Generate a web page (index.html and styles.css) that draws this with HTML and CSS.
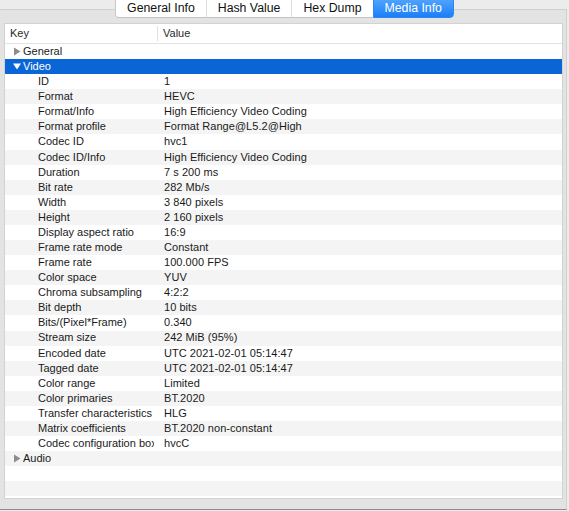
FILE: index.html
```html
<!DOCTYPE html>
<html lang="en">
<head>
    <meta charset="UTF-8">
    <title>Media Info</title>
    <link rel="stylesheet" href="styles.css">
</head>
<body>
    <div class="tabs">
        <div class="seg">General Info</div>
        <div class="seg">Hash Value</div>
        <div class="seg">Hex Dump</div>
        <div class="seg active">Media Info</div>
    </div>

    <div class="tabbox">
        <div class="table">
            <div class="thead">
                <div class="hkey">Key</div>
                <div class="hval">Value</div>
            </div>
            <div class="tbody">
                <div class="row group">
                    <div class="key"><svg class="tri" width="8" height="9" viewBox="0 0 8 9"><path d="M1 0.5 L7.5 4.5 L1 8.5 Z" fill="#8c8c8c"/></svg>General</div>
                </div>
                <div class="row group selected">
                    <div class="key"><svg class="tri" width="8" height="9" viewBox="0 0 8 9"><path d="M0 1.5 L8 1.5 L4 7.5 Z" fill="#fff"/></svg>Video</div>
                </div>
                <div class="row"><div class="key">ID</div><div class="val">1</div></div>
                <div class="row"><div class="key">Format</div><div class="val">HEVC</div></div>
                <div class="row"><div class="key">Format/Info</div><div class="val">High Efficiency Video Coding</div></div>
                <div class="row"><div class="key">Format profile</div><div class="val">Format Range@L5.2@High</div></div>
                <div class="row"><div class="key">Codec ID</div><div class="val">hvc1</div></div>
                <div class="row"><div class="key">Codec ID/Info</div><div class="val">High Efficiency Video Coding</div></div>
                <div class="row"><div class="key">Duration</div><div class="val">7 s 200 ms</div></div>
                <div class="row"><div class="key">Bit rate</div><div class="val">282 Mb/s</div></div>
                <div class="row"><div class="key">Width</div><div class="val">3 840 pixels</div></div>
                <div class="row"><div class="key">Height</div><div class="val">2 160 pixels</div></div>
                <div class="row"><div class="key">Display aspect ratio</div><div class="val">16:9</div></div>
                <div class="row"><div class="key">Frame rate mode</div><div class="val">Constant</div></div>
                <div class="row"><div class="key">Frame rate</div><div class="val">100.000 FPS</div></div>
                <div class="row"><div class="key">Color space</div><div class="val">YUV</div></div>
                <div class="row"><div class="key">Chroma subsampling</div><div class="val">4:2:2</div></div>
                <div class="row"><div class="key">Bit depth</div><div class="val">10 bits</div></div>
                <div class="row"><div class="key">Bits/(Pixel*Frame)</div><div class="val">0.340</div></div>
                <div class="row"><div class="key">Stream size</div><div class="val">242 MiB (95%)</div></div>
                <div class="row"><div class="key">Encoded date</div><div class="val">UTC 2021-02-01 05:14:47</div></div>
                <div class="row"><div class="key">Tagged date</div><div class="val">UTC 2021-02-01 05:14:47</div></div>
                <div class="row"><div class="key">Color range</div><div class="val">Limited</div></div>
                <div class="row"><div class="key">Color primaries</div><div class="val">BT.2020</div></div>
                <div class="row"><div class="key">Transfer characteristics</div><div class="val">HLG</div></div>
                <div class="row"><div class="key">Matrix coefficients</div><div class="val">BT.2020 non-constant</div></div>
                <div class="row"><div class="key">Codec configuration box</div><div class="val">hvcC</div></div>
                <div class="row group">
                    <div class="key"><svg class="tri" width="8" height="9" viewBox="0 0 8 9"><path d="M1 0.5 L7.5 4.5 L1 8.5 Z" fill="#8c8c8c"/></svg>Audio</div>
                </div>
            </div>
        </div>
    </div>
</body>
</html>
```

FILE: styles.css
```css
body {
    margin: 0;
    background-color: #ececec;
    font-family: 'Liberation Sans', Arial, sans-serif;
    color: #1a1a1a;
    overflow: hidden;
}

/* segmented tab control */
.tabs {
    position: relative;
    z-index: 1;
    display: flex;
    justify-content: center;
    margin-top: -3px;
    margin-bottom: -9px;
}
.seg {
    height: 19px;
    line-height: 20px;
    padding: 0 11px;
    font-size: 12.3px;
    color: #111;
    background-color: #fff;
    border-top: 1px solid #c8c8c8;
    border-bottom: 1px solid #c2c2c2;
    border-left: 1px solid #dcdcdc;
}
.seg:first-child {
    border-left: 1px solid #c8c8c8;
    border-radius: 0 0 0 4px;
}
.seg.active {
    color: #fff;
    background: linear-gradient(#55a7fd, #1b7ef8);
    border-color: #2f86f0;
    border-left: 1px solid #2f86f0;
    border-right: 1px solid #2f86f0;
    border-radius: 0 0 4px 0;
}

/* tab box */
.tabbox {
    margin-left: -1px;
    width: 568px;
    height: 501px;
    box-sizing: border-box;
    background-color: #e3e3e3;
    border: 1px solid #d0d0d0;
    border-bottom: 1px solid #8a8a8a;
    padding: 13px 3px 10px 4px;
}

.table {
    height: 100%;
    box-sizing: border-box;
    border: 1px solid #d2d2d2;
    background-color: #fff;
    display: flex;
    flex-direction: column;
    font-size: 11px;
}
.thead {
    display: flex;
    height: 19px;
    line-height: 18px;
    border-bottom: 1px solid #e2e2e2;
    color: #2a2a2a;
}
.hkey {
    width: 147px;
    padding-left: 5px;
    border-right: 1px solid #e0e0e0;
    margin: 2px 0 2px 0;
    line-height: 15px;
}
.hval {
    padding-left: 5px;
    line-height: 18px;
}

.tbody {
    flex: 1;
    overflow: hidden;
    background: repeating-linear-gradient(#fff 0, #fff 15.08px, #f4f4f4 15.08px, #f4f4f4 30.16px);
}
.row {
    display: flex;
    height: 15.08px;
    line-height: 15px;
    white-space: nowrap;
}
.key {
    width: 116px;
    padding-left: 33px;
    margin-right: 3px;
    overflow: hidden;
    flex-shrink: 0;
}
.val {
    padding-left: 7px;
    letter-spacing: 0.05px;
}
.row.group .key {
    width: auto;
    padding-left: 8px;
    display: flex;
    align-items: center;
}
.tri {
    margin-right: 2px;
}
.row.selected {
    background-color: #0a66d6;
    color: #fff;
}
```
